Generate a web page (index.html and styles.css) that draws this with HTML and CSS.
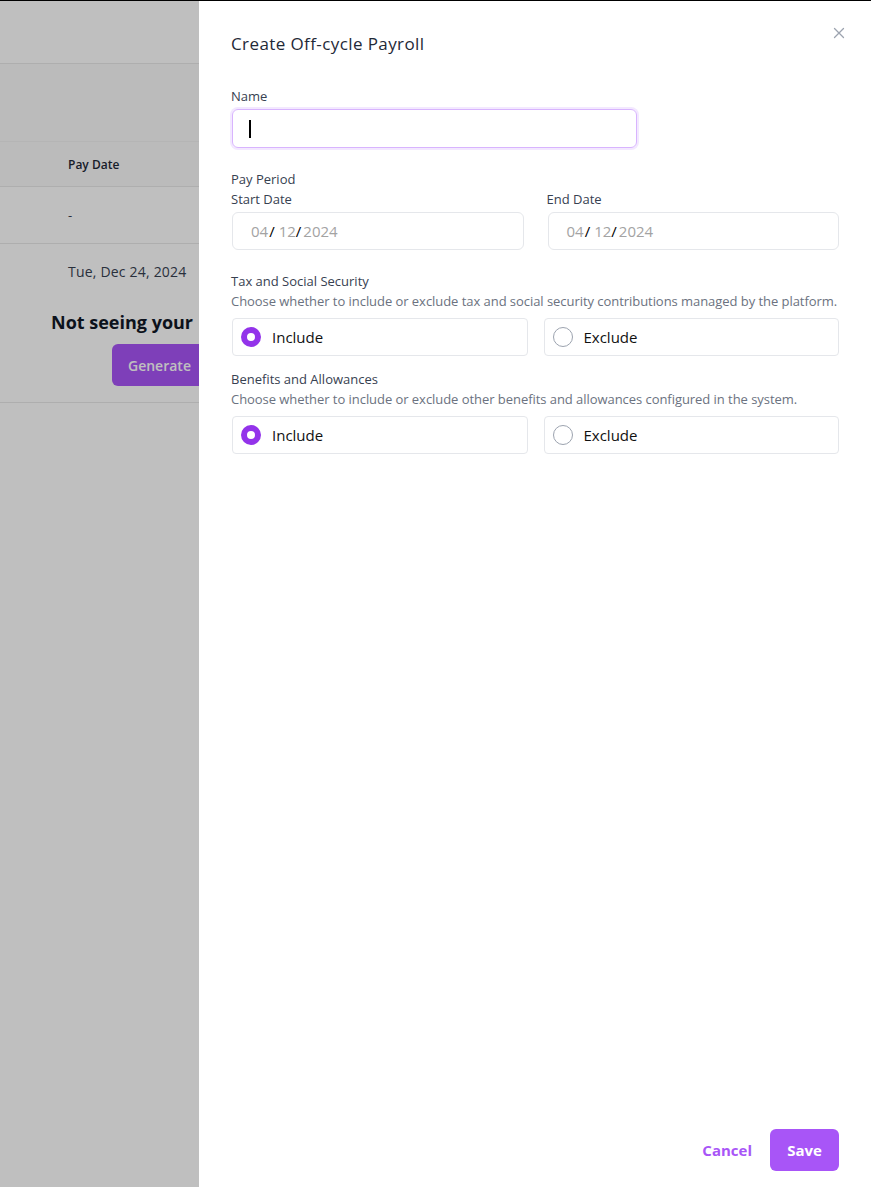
FILE: index.html
```html
<!DOCTYPE html>
<html>
<head>
    <title>Payroll</title>
    <link rel="stylesheet" href="styles.css">
</head>
<body>
    <div class="page">
        <div class="page-header"></div>
        <div class="page-toolbar"></div>
        <div class="table-head">
            <div class="cell head-cell">Pay Date</div>
        </div>
        <div class="table-row">
            <div class="cell">-</div>
        </div>
        <div class="upcoming">
            <div class="cell">Tue, Dec 24, 2024</div>
            <div class="empty-title">Not seeing your</div>
            <button class="generate-button">Generate</button>
        </div>
    </div>

    <div class="overlay"></div>

    <aside class="drawer">
        <button class="close-button" aria-label="Close">
            <svg width="12" height="12" viewBox="0 0 12 12">
                <path d="M1.5 1.5L10.5 10.5M10.5 1.5L1.5 10.5" stroke="#9ca3af" stroke-width="1.3" stroke-linecap="round"/>
            </svg>
        </button>

        <div class="drawer-body">
            <h2 class="drawer-title">Create Off-cycle Payroll</h2>

            <div class="field">
                <label class="label">Name</label>
                <div class="text-input focused"><span class="caret"></span></div>
            </div>

            <div class="field">
                <div class="label section">Pay Period</div>
                <div class="date-grid">
                    <div class="date-field">
                        <label class="label">Start Date</label>
                        <div class="date-input">
                            <span class="seg">04</span><span class="slash">/</span>
                            <span class="seg">12</span><span class="slash slash-end">/</span><span class="seg">2024</span>
                        </div>
                    </div>
                    <div class="date-field">
                        <label class="label">End Date</label>
                        <div class="date-input">
                            <span class="seg">04</span><span class="slash">/</span>
                            <span class="seg">12</span><span class="slash slash-end">/</span><span class="seg">2024</span>
                        </div>
                    </div>
                </div>
            </div>

            <div class="field field-tight">
                <div class="label section">Tax and Social Security</div>
                <p class="hint">Choose whether to include or exclude tax and social security contributions managed by the platform.</p>
                <div class="choice-grid">
                    <label class="choice"><span class="radio checked"></span>Include</label>
                    <label class="choice"><span class="radio"></span>Exclude</label>
                </div>
            </div>

            <div class="field">
                <div class="label section">Benefits and Allowances</div>
                <p class="hint">Choose whether to include or exclude other benefits and allowances configured in the system.</p>
                <div class="choice-grid">
                    <label class="choice"><span class="radio checked"></span>Include</label>
                    <label class="choice"><span class="radio"></span>Exclude</label>
                </div>
            </div>
        </div>

        <div class="drawer-footer">
            <button class="link-button">Cancel</button>
            <button class="primary-button">Save</button>
        </div>
    </aside>
</body>
</html>
```

FILE: styles.css
```css
html {
    border-top: 1px solid #000;
}

body {
    margin: 0;
    padding: 0;
    font-family: 'Open Sans', 'Liberation Sans', sans-serif;
    background: #ffffff;
    color: #111827;
    height: 1186px;
    overflow: hidden;
}

/* page underneath the drawer */

.page {
    width: 199px;
    overflow: hidden;
    display: flex;
    flex-direction: column;
}

.page-header {
    height: 62px;
    border-bottom: 1px solid #e8e8e8;
}

.page-toolbar {
    height: 77px;
    background: #fafafa;
    border-bottom: 1px solid #f2f2f2;
}

.table-head {
    height: 44px;
    display: flex;
    align-items: center;
    border-bottom: 1px solid #e8e8e8;
    background: #fafafa;
}

.cell {
    padding-left: 68px;
    font-size: 13px;
    color: #374151;
    white-space: nowrap;
}

.head-cell {
    font-size: 12px;
    font-weight: 600;
    color: #1f2937;
}

.table-row {
    height: 56px;
    display: flex;
    align-items: center;
    border-bottom: 1px solid #e8e8e8;
}

.upcoming {
    display: flex;
    flex-direction: column;
    align-items: flex-start;
    padding-top: 18px;
    height: 140px;
    border-bottom: 1px solid #e8e8e8;
}

.upcoming .cell {
    font-size: 14px;
    letter-spacing: 0.2px;
}

.empty-title {
    margin-top: 29px;
    padding-left: 51px;
    font-size: 18px;
    font-weight: 700;
    color: #111827;
    white-space: nowrap;
}

.generate-button {
    margin: 10px 0 0 112px;
    height: 42px;
    width: 110px;
    padding: 0 16px;
    text-align: left;
    flex-shrink: 0;
    background: #a855f7;
    border: none;
    border-radius: 6px;
    color: #fff;
    font-family: inherit;
    font-size: 14px;
    font-weight: 600;
    white-space: nowrap;
}

.overlay {
    position: fixed;
    top: 1px;
    left: 0;
    right: 0;
    bottom: 0;
    background: rgba(0, 0, 0, 0.25);
}

/* drawer */

.drawer {
    position: fixed;
    top: 1px;
    right: 0;
    bottom: 0;
    width: 672px;
    background: #fff;
    display: flex;
    flex-direction: column;
    box-sizing: border-box;
    padding: 0 32px;
}

.close-button {
    position: absolute;
    top: 24px;
    right: 24px;
    width: 16px;
    height: 16px;
    padding: 0;
    border: none;
    background: none;
    display: flex;
    align-items: center;
    justify-content: center;
}

.drawer-body {
    flex: 1;
    display: flex;
    flex-direction: column;
}

.drawer-title {
    margin: 32px 0 31px;
    font-size: 17px;
    font-weight: 500;
    letter-spacing: 0.4px;
    color: #1f2937;
    line-height: 22px;
}

.field {
    display: flex;
    flex-direction: column;
    margin-bottom: 21px;
}

.field-tight {
    margin-bottom: 13px;
}

.label {
    display: block;
    font-size: 13px;
    line-height: 20px;
    color: #374151;
    margin-bottom: 3px;
}

.label.section {
    margin-bottom: 0;
}

.hint {
    margin: 0 0 7px;
    font-size: 13px;
    line-height: 20px;
    letter-spacing: -0.05px;
    color: #6b7280;
    white-space: nowrap;
}

.text-input {
    width: 405px;
    height: 39px;
    margin-left: 1px;
    border: 1px solid #d8b4fe;
    border-radius: 6px;
    display: flex;
    align-items: center;
    padding-left: 16px;
    box-sizing: border-box;
}

.text-input.focused {
    box-shadow: 0 0 0 2px #f3e8ff;
}

.caret {
    width: 2px;
    height: 18px;
    background: #000;
}

.date-grid {
    display: grid;
    grid-template-columns: 1fr 1fr;
    gap: 23px;
}

.date-field {
    display: flex;
    flex-direction: column;
}

.date-input {
    height: 38px;
    margin-left: 1px;
    border: 1px solid #e5e7eb;
    border-radius: 6px;
    box-sizing: border-box;
    display: flex;
    align-items: center;
    padding-left: 18px;
    font-size: 15px;
}

.seg {
    color: #a3a3a3;
}

.slash {
    color: #000;
    margin: 0 4px 0 1px;
}

.slash.slash-end {
    margin: 0 2px 0 0;
}

.choice-grid {
    display: grid;
    grid-template-columns: 1fr 1fr;
    gap: 15px;
}

.choice {
    height: 38px;
    margin-left: 1px;
    border: 1px solid #e5e7eb;
    border-radius: 4px;
    box-sizing: border-box;
    display: flex;
    align-items: center;
    gap: 11px;
    padding-left: 8px;
    font-size: 15px;
    color: #111;
}

.radio {
    width: 20px;
    height: 20px;
    border-radius: 50%;
    border: 1px solid #9ca3af;
    box-sizing: border-box;
}

.radio.checked {
    border: 6.5px solid #9333ea;
    background: #fff;
}

.drawer-footer {
    display: flex;
    justify-content: flex-end;
    align-items: center;
    gap: 18px;
    padding-bottom: 16px;
}

.link-button {
    background: none;
    border: none;
    padding: 0;
    font-family: inherit;
    font-size: 15px;
    font-weight: 700;
    color: #a855f7;
}

.primary-button {
    height: 42px;
    width: 69px;
    background: #a855f7;
    border: none;
    border-radius: 6px;
    color: #fff;
    font-family: inherit;
    font-size: 15px;
    font-weight: 700;
}
```
